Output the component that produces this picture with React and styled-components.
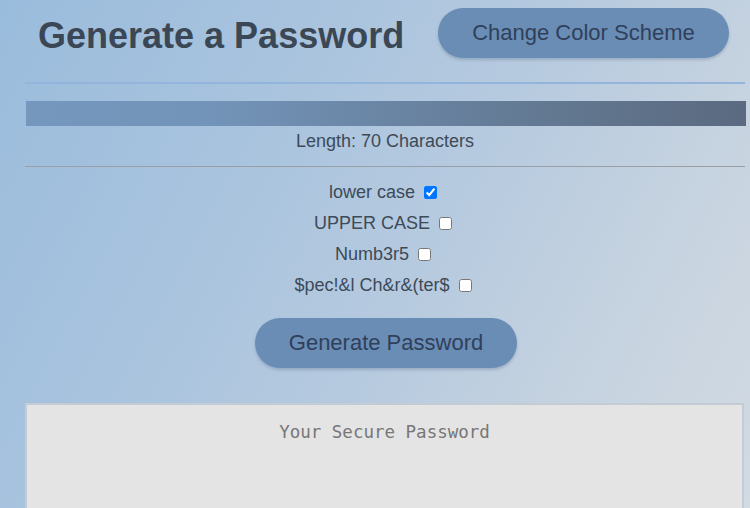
import React, { useState } from "react";
import styled, { createGlobalStyle } from "styled-components";

const Global = createGlobalStyle`
  html, body { margin: 0; padding: 0; }
  body {
    min-height: 100vh;
    font-family: "Liberation Sans", Arial, sans-serif;
    color: #3d4a58;
    background: linear-gradient(118deg, #9abcdc 0%, #a8c3de 30%, #b6cadf 55%, #c6d3e0 78%, #d2dae2 100%);
    background-attachment: fixed;
    overflow: hidden;
  }
`;

const Page = styled.main`
  padding: 0 5px 0 25px;
  display: flex;
  flex-direction: column;
`;

const Header = styled.header`
  display: flex;
  align-items: flex-start;
  gap: 34px;
  padding: 8px 0 0 13px;
`;

const Title = styled.h1`
  margin: 7px 0 0 0;
  font-size: 36px;
  font-weight: bold;
  color: #3b4754;
  line-height: 42px;
`;

const PillButton = styled.button`
  height: 50px;
  border: none;
  border-radius: 25px;
  background: #6a8db5;
  color: #30405a;
  font-family: "Liberation Sans", Arial, sans-serif;
  font-size: 22px;
  padding: 0 ${(p) => p.$pad}px;
  box-shadow: 0 2px 3px rgba(60, 80, 110, 0.25);
  cursor: pointer;
`;

const Rule = styled.hr`
  width: 720px;
  margin: ${(p) => p.$mt}px 0 0 0;
  border: none;
  border-top: ${(p) => p.$w}px solid ${(p) => p.$color};
`;

const LengthRange = styled.input`
  -webkit-appearance: none;
  appearance: none;
  width: 720px;
  height: 25px;
  margin: 17px 0 0 1px;
  background: linear-gradient(90deg, #7597bd 0%, #7394b9 25%, #6a85a4 50%, #627790 75%, #5b6a80 100%);
  outline: none;
  &::-webkit-slider-thumb {
    -webkit-appearance: none;
    appearance: none;
    width: 0;
    height: 0;
  }
`;

const LengthLabel = styled.div`
  text-align: center;
  font-size: 18px;
  line-height: 21px;
  margin-top: 5px;
  color: #3d4a58;
`;

const Options = styled.div`
  display: flex;
  flex-direction: column;
  align-items: center;
  gap: 10px;
  margin-top: 15px;
  padding-right: 4px;
`;

const OptionRow = styled.label`
  display: flex;
  align-items: center;
  gap: 9px;
  font-size: 18px;
  line-height: 21px;
  color: #3d4a58;
`;

const Check = styled.input`
  width: 13px;
  height: 13px;
  margin: 0;
`;

const Center = styled.div`
  display: flex;
  justify-content: center;
  margin-top: 22px;
  padding-left: 2px;
`;

const Output = styled.textarea`
  box-sizing: border-box;
  width: 719px;
  height: 140px;
  margin-top: 35px;
  border: 2px solid #c3ccd5;
  background: #e4e4e4;
  resize: none;
  padding: 17px 10px;
  text-align: center;
  font-family: "DejaVu Sans Mono", "Liberation Mono", monospace;
  font-size: 17.5px;
  line-height: 21px;
  color: #555;
  outline: none;
  &::placeholder {
    color: #777;
  }
`;

const options = [
  { key: "lower", label: "lower case" },
  { key: "upper", label: "UPPER CASE" },
  { key: "num", label: "Numb3r5" },
  { key: "special", label: "$pec!&l Ch&r&(ter$" },
];

export default function App() {
  const [length, setLength] = useState(70);
  const [checked, setChecked] = useState({ lower: true, upper: false, num: false, special: false });

  return (
    <>
      <Global />
      <Page>
        <Header>
          <Title>Generate a Password</Title>
          <PillButton $pad={34}>Change Color Scheme</PillButton>
        </Header>
        <Rule $mt={24} $w={2} $color="#93b5dc" />
        <LengthRange
          type="range"
          min="8"
          max="70"
          value={length}
          onChange={(e) => setLength(Number(e.target.value))}
        />
        <LengthLabel>Length: {length} Characters</LengthLabel>
        <Rule $mt={14} $w={1} $color="#9a9fa6" />
        <Options>
          {options.map((o) => (
            <OptionRow key={o.key}>
              {o.label}
              <Check
                type="checkbox"
                checked={checked[o.key]}
                onChange={() => setChecked({ ...checked, [o.key]: !checked[o.key] })}
              />
            </OptionRow>
          ))}
        </Options>
        <Center>
          <PillButton $pad={34}>Generate Password</PillButton>
        </Center>
        <Output placeholder="Your Secure Password" readOnly />
      </Page>
    </>
  );
}
